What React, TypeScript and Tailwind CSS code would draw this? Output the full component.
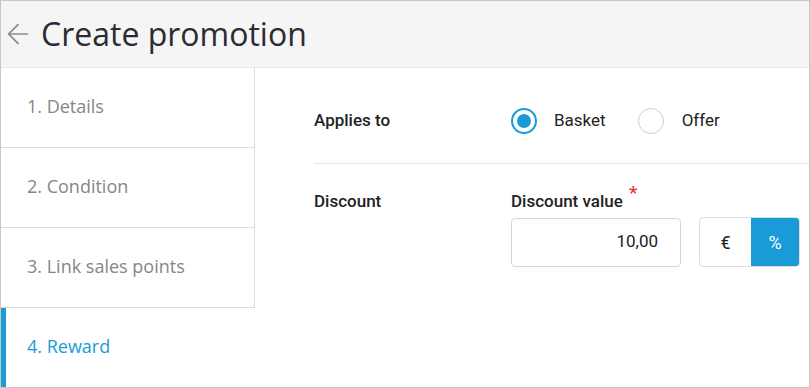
import { ArrowLeft } from "lucide-react";

const steps = [
  { label: "1. Details", active: false },
  { label: "2. Condition", active: false },
  { label: "3. Link sales points", active: false },
  { label: "4. Reward", active: true },
];

const headFont = { fontFamily: '"Open Sans", "Noto Sans", sans-serif' };

const App = () => {
  return (
    <div className="flex h-[388px] w-[810px] flex-col overflow-hidden border border-[#c8c8c8] bg-white">
      <header className="flex h-[67px] shrink-0 items-center border-b border-[#e6e6e6] bg-[#f5f5f5] pl-[1px]">
        <ArrowLeft size={32} strokeWidth={1.3} className="text-[#8a8a8a]" />
        <h1 className="ml-[7px] text-[32px] leading-none text-[#2b2b33]" style={headFont}>
          Create promotion
        </h1>
      </header>

      <div className="flex flex-1">
        <nav className="flex w-[254px] shrink-0 flex-col">
          {steps.map((step) =>
            step.active ? (
              <div
                key={step.label}
                className="flex h-[80px] items-center border-l-[5px] border-[#1a9bd7] pb-[3px] pl-[21px]"
              >
                <span className="text-[18px] text-[#1a9bd7]" style={headFont}>
                  {step.label}
                </span>
              </div>
            ) : (
              <div
                key={step.label}
                className="flex h-[80px] items-center border-r border-b border-[#dcdcdc] pb-[2px] pl-[26px]"
              >
                <span className="text-[18px] text-[#868686]" style={headFont}>
                  {step.label}
                </span>
              </div>
            )
          )}
        </nav>

        <main className="flex-1 pl-[59px]" style={{ fontFamily: "Roboto, sans-serif" }}>
          <div className="flex h-[96px] items-center border-b border-[#e6e6e6] pt-[10px]">
            <p className="w-[197px] text-[17px] font-medium text-[#222]">Applies to</p>
            <label className="flex items-center">
              <span className="flex h-[26px] w-[26px] items-center justify-center rounded-full border-2 border-[#1a9bd7]">
                <span className="h-[14px] w-[14px] rounded-full bg-[#1a9bd7]" />
              </span>
              <span className="ml-[17px] text-[17px] text-[#222]">Basket</span>
            </label>
            <label className="ml-[32px] flex items-center">
              <span className="h-[26px] w-[26px] rounded-full border border-[#cfcfcf]" />
              <span className="ml-[18px] text-[17px] text-[#222]">Offer</span>
            </label>
          </div>

          <div className="flex pt-[27px]">
            <p className="w-[197px] text-[17px] font-medium leading-5 text-[#222]">Discount</p>
            <div>
              <p className="relative text-[17px] font-medium leading-5 text-[#222]">
                Discount value
                <span className="absolute -top-[8px] ml-[6px] text-[19px] text-[#e53935]">*</span>
              </p>
              <div className="mt-[6px] flex items-center">
                <div className="flex h-[49px] w-[170px] items-center justify-end rounded-[4px] border border-[#d6d6d6] pr-[22px] text-[17px] text-[#222]">
                  10,00
                </div>
                <div className="ml-[18px] flex h-[50px] w-[101px] overflow-hidden rounded-[4px] border border-[#dedede]">
                  <span className="flex w-[51px] items-center justify-center text-[18px] text-[#222]">€</span>
                  <span className="flex flex-1 items-center justify-center bg-[#1a9bd7] text-[18px] text-white">%</span>
                </div>
              </div>
            </div>
          </div>
        </main>
      </div>
    </div>
  );
};

export default App;
